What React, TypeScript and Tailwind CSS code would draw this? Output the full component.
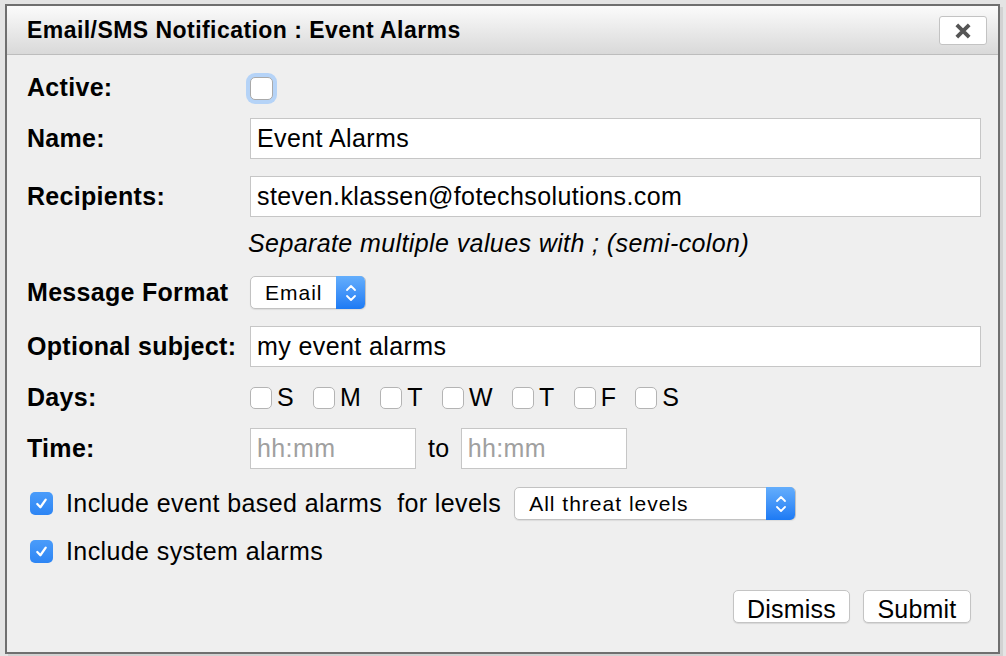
import { useState } from 'react';

const font = { fontFamily: '"Liberation Sans", Arial, Helvetica, sans-serif' };

function Box({ checked, ring }: { checked?: boolean; ring?: boolean }) {
  if (checked) {
    return (
      <span className="flex h-[23px] w-[23px] shrink-0 items-center justify-center rounded-[5px] bg-gradient-to-b from-[#4a9cfa] to-[#2d85f4]">
        <svg width="15" height="15" viewBox="0 0 16 16" fill="none">
          <path d="M3.5 8.5 L6.8 12 L12.5 3.8" stroke="white" strokeWidth="2.4" strokeLinecap="round" strokeLinejoin="round" />
        </svg>
      </span>
    );
  }
  return (
    <span
      className={
        ring
          ? 'block h-[23px] w-[23px] shrink-0 rounded-[5px] border border-[#a9a9a9] bg-white shadow-[0_0_0_4px_#b5d3f7]'
          : 'block h-[22px] w-[22px] shrink-0 rounded-[5px] border border-[#b4b4b4] bg-white'
      }
    />
  );
}

function Stepper({ h }: { h: number }) {
  return (
    <span
      className="flex w-[29px] items-center justify-center rounded-r-[5px] bg-gradient-to-b from-[#64aefc] to-[#1c7af4]"
      style={{ height: h }}
    >
      <svg width="12" height="20" viewBox="0 0 12 20" fill="none">
        <path d="M2 7 L6 3 L10 7" stroke="white" strokeWidth="1.8" strokeLinecap="round" strokeLinejoin="round" />
        <path d="M2 13 L6 17 L10 13" stroke="white" strokeWidth="1.8" strokeLinecap="round" strokeLinejoin="round" />
      </svg>
    </span>
  );
}

export default function App() {
  const [days] = useState(['S', 'M', 'T', 'W', 'T', 'F', 'S']);

  const label = 'w-[223px] shrink-0 text-[25px] font-bold tracking-[0.3px] text-black';
  const input =
    'flex h-[41px] items-center border border-[#c6c6c6] bg-white px-[6px] text-[25px] tracking-[0.4px]';
  const text = 'text-[25px] tracking-[0.4px] text-black';

  return (
    <div className="h-[656px] w-[1006px] overflow-hidden bg-[#e4e4e4] pl-[5px] pt-[4px]" style={font}>
      <div className="flex h-[650px] w-[995px] flex-col border-2 border-[#6f6f6f] bg-[#efefef] shadow-[3px_3px_0_#d2d2d2]">
        <div className="flex h-[49px] shrink-0 items-center justify-between border-b border-[#bdbdbd] bg-gradient-to-b from-[#fbfbfb] to-[#d9d9d9] pl-[20px] pr-[11px]">
          <span className="text-[23px] font-bold tracking-[0.45px] text-black">Email/SMS Notification : Event Alarms</span>
          <button className="mt-[1px] flex h-[29px] w-[48px] items-center justify-center rounded-[3px] border border-[#c3c3c3] bg-white">
            <svg width="18" height="18" viewBox="0 0 16 16">
              <path d="M2.5 2.5 L13.5 13.5 M13.5 2.5 L2.5 13.5" stroke="#555" strokeWidth="3.4" />
            </svg>
          </button>
        </div>

        <div className="flex flex-col pl-[20px] pr-[17px]">
          <div className="mt-[17px] flex h-[32px] items-center">
            <span className={label}>Active:</span>
            <Box ring />
          </div>

          <div className="mt-[14px] flex items-center">
            <span className={label}>Name:</span>
            <div className={input + ' flex-1 text-black'}>Event Alarms</div>
          </div>

          <div className="mt-[17px] flex items-center">
            <span className={label}>Recipients:</span>
            <div className={input + ' flex-1 text-black'}>steven.klassen@fotechsolutions.com</div>
          </div>

          <div className="mt-[15px] flex h-[24px] items-center pl-[221px] text-[25px] italic tracking-[0.4px] text-black">
            Separate multiple values with ; (semi-colon)
          </div>

          <div className="mt-[20px] flex h-[33px] items-center">
            <span className={label}>Message Format</span>
            <div className="flex h-[33px] w-[116px] items-center justify-between rounded-[5px] border border-[#c2c2c2] bg-white shadow-[0_1px_1px_rgba(0,0,0,0.08)]">
              <span className="pl-[14px] text-[21px] tracking-[1px] text-black">Email</span>
              <Stepper h={33} />
            </div>
          </div>

          <div className="mt-[17px] flex items-center">
            <span className={label}>Optional subject:</span>
            <div className={input + ' flex-1 text-black'}>my event alarms</div>
          </div>

          <div className="mt-[19px] flex h-[23px] items-center">
            <span className={label}>Days:</span>
            <div className="flex items-center gap-[19px]">
              {days.map((d, i) => (
                <span key={i} className={'flex items-center gap-[5px] ' + text}>
                  <Box />
                  {d}
                </span>
              ))}
            </div>
          </div>

          <div className="mt-[19px] flex items-center">
            <span className={label}>Time:</span>
            <div className={input + ' w-[166px] text-[#a0a0a0]'}>hh:mm</div>
            <span className={'ml-[12px] mr-[11px] ' + text}>to</span>
            <div className={input + ' w-[166px] text-[#a0a0a0]'}>hh:mm</div>
          </div>

          <div className="mt-[18px] flex h-[33px] items-center pl-[3px]">
            <Box checked />
            <span className={'ml-[13px] ' + text}>Include event based alarms</span>
            <span className={'ml-[15px] ' + text}>for levels</span>
            <div className="ml-[13px] flex h-[33px] w-[282px] items-center justify-between rounded-[5px] border border-[#c2c2c2] bg-white shadow-[0_1px_1px_rgba(0,0,0,0.08)]">
              <span className="pl-[14px] text-[21px] tracking-[1px] text-black">All threat levels</span>
              <Stepper h={33} />
            </div>
          </div>

          <div className="mt-[20px] flex h-[23px] items-center pl-[3px]">
            <Box checked />
            <span className={'ml-[13px] ' + text}>Include system alarms</span>
          </div>

          <div className="mr-[10px] mt-[27px] flex justify-end gap-[13px]">
            <button className="h-[33px] w-[117px] rounded-[5px] border border-[#c4c4c4] bg-white text-[25px] tracking-[0.2px] text-black shadow-[0_1px_1px_rgba(0,0,0,0.1)]">
              Dismiss
            </button>
            <button className="h-[33px] w-[108px] rounded-[5px] border border-[#c4c4c4] bg-white text-[25px] tracking-[0.2px] text-black shadow-[0_1px_1px_rgba(0,0,0,0.1)]">
              Submit
            </button>
          </div>
        </div>
      </div>
    </div>
  );
}
